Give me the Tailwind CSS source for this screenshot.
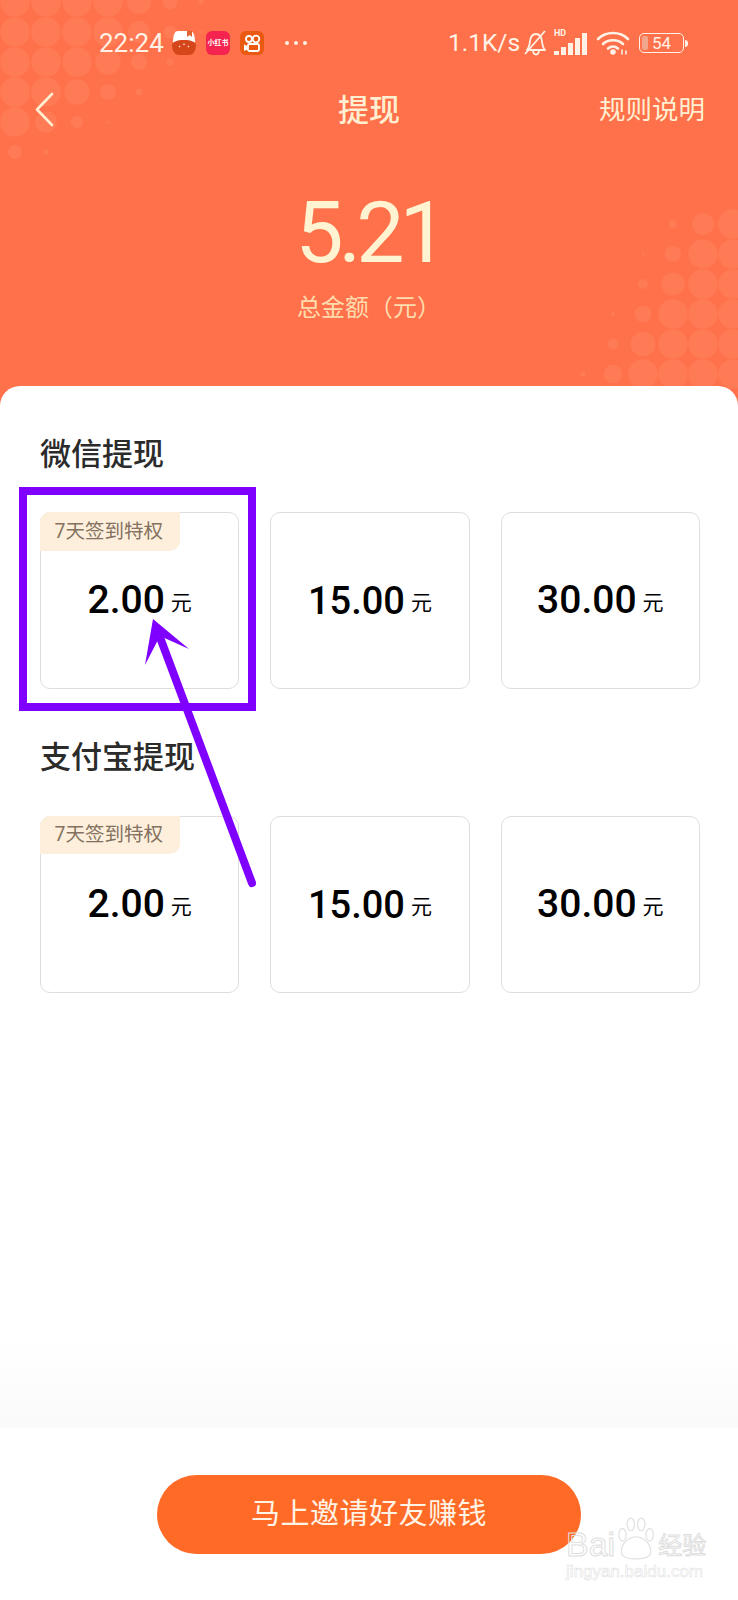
<!DOCTYPE html>
<html lang="zh-CN">
<head>
<meta charset="UTF-8" />
<meta name="viewport" content="width=device-width, initial-scale=1.0" />
<title>提现</title>
<script src="https://cdn.jsdelivr.net/npm/@tailwindcss/browser@4"></script>
</head>
<body class="bg-white">
<div class="relative w-[738px] h-[1600px] overflow-hidden flex flex-col bg-[#ff714a] font-['Roboto','Noto_Sans_CJK_SC',sans-serif]">

	<!-- dots behind the header -->
	<svg id="dots" class="absolute left-0 top-0" width="738" height="390" fill="#fff" fill-opacity="0.07"></svg>

	<header class="relative h-[386px] shrink-0 flex flex-col text-[#ffefd2]">
		<!-- status bar -->
		<div class="h-[86px] flex items-center pl-[99px] pr-[50px] text-[#fff1e6]">
			<span class="text-[26px] leading-none w-[73px]">22:24</span>
			<svg class="w-[24px] h-[24px] mr-[10px]" viewBox="0 0 24 24">
				<path d="M1 12C1 3 3 0 6 0h12c3 0 5 3 5 12H1z" fill="#fff" />
				<path d="M15 0h5v6l-2.500-2-2.500 2z" fill="#e0622e" />
				<path d="M0 14c0-3 5-5 12-5s12 2 12 5c0 6-3 10-7 10H7c-4 0-7-4-7-10z" fill="#d5471b" />
				<path d="M7 15l1 1M12 12.500v1.500M17 15l-1 1" stroke="#ffd9c4" stroke-width="1.500" />
			</svg>
			<div class="w-[24px] h-[24px] mr-[10px] rounded-[6px] bg-[#f5234f] flex items-center justify-center">
				<span class="text-[7px] leading-none font-bold text-white whitespace-nowrap">小红书</span>
			</div>
			<svg class="w-[24px] h-[24px]" viewBox="0 0 24 24">
				<rect width="24" height="24" rx="6" fill="#e9590f" />
				<g fill="none" stroke="#fff" stroke-width="1.800">
					<circle cx="9" cy="8" r="3" />
					<circle cx="16" cy="8" r="3.300" />
					<rect x="8" y="13" width="11" height="7" rx="1.500" />
				</g>
				<path d="M7.500 15L4 13.500V20l3.500-1.500z" fill="#fff" />
			</svg>
			<div class="flex gap-[5px] ml-[21px]">
				<span class="w-[4px] h-[4px] rounded-full bg-[#fff1e6]"></span>
				<span class="w-[4px] h-[4px] rounded-full bg-[#fff1e6]"></span>
				<span class="w-[4px] h-[4px] rounded-full bg-[#fff1e6]"></span>
			</div>
			<span class="ml-auto text-[24.500px] leading-none w-[75px] whitespace-nowrap">1.1K/s</span>
			<svg class="w-[24px] h-[26px] mr-[7px]" viewBox="0 0 24 26" fill="none" stroke="#fff1e6" stroke-width="1.800" stroke-linejoin="round">
				<path d="M4 20c2-2 2.500-5 3-8.500C7.500 7 9.500 4 13 4s5.500 3 6 7.500c.4 3.500 1 6.500 3 8.500H4z" />
				<path d="M10 20c0 3 1.300 4.500 3 4.500s3-1.500 3-4.500" />
				<path d="M22 1L2 24" />
			</svg>
			<div class="relative w-[34px] h-[24px] mr-[8px]">
				<span class="absolute left-0 -top-[2px] text-[9px] leading-none font-bold">HD</span>
				<div class="absolute inset-0 flex items-end gap-[2px]">
					<span class="w-[5px] h-[4px] bg-[#fff1e6]"></span>
					<span class="w-[5px] h-[8px] bg-[#fff1e6]"></span>
					<span class="w-[5px] h-[12px] bg-[#fff1e6]"></span>
					<span class="w-[5px] h-[17px] bg-[#fff1e6]"></span>
					<span class="w-[5px] h-[22px] bg-[#fff1e6]"></span>
				</div>
			</div>
			<svg class="w-[34px] h-[24px] mr-[9px]" viewBox="0 0 34 24" fill="none" stroke="#fff1e6" stroke-width="2.600" stroke-linecap="round">
				<path d="M2 8c8-8 22-8 30 0" />
				<path d="M7 13c5-5 15-5 20 0" />
				<path d="M12 17.500c3-2.500 7-2.500 10 0" />
				<circle cx="17" cy="21" r="1.500" fill="#fff1e6" />
				<path d="M26 19v4M30 20v3" stroke-width="1.500" />
			</svg>
			<div class="flex items-center">
				<div class="relative w-[45px] h-[20px] rounded-[5px] border-[1.500px] border-[#fff1e6] flex items-center justify-center">
					<span class="absolute left-[2px] top-[2px] bottom-[2px] w-[6px] rounded-[2px] bg-[#f0a58c]"></span>
					<span class="relative text-[17px] leading-none">54</span>
				</div>
				<span class="w-[3px] h-[7px] ml-[1px] rounded-r-full bg-[#fff1e6]"></span>
			</div>
		</div>
		<!-- nav -->
		<div class="relative h-[48px] flex items-center justify-center">
			<svg class="absolute left-[35px] top-[6px] w-[20px] h-[35px]" viewBox="0 0 20 35" fill="none" stroke="#ffefd2" stroke-width="2.600" stroke-linecap="round" stroke-linejoin="round">
				<path d="M17 2L2 17.500 17 33" />
			</svg>
			<span class="text-[31px] leading-none font-medium">提现</span>
			<span class="absolute right-[33px] top-[10px] text-[26.500px] leading-[28px]">规则说明</span>
		</div>
		<!-- balance -->
		<div class="mt-[52px] flex flex-col items-center">
			<span class="text-[86px] leading-[94px] tracking-[-5px] text-[#fff3d2]">5.21</span>
			<span class="mt-[12px] text-[24px] leading-[32px] text-[#ffdcae]">总金额（元）</span>
		</div>
	</header>

	<!-- white panel -->
	<main class="relative flex-1 bg-white rounded-t-[20px] px-[40px] pt-[50px] flex flex-col">
		<h2 class="text-[31px] leading-[38px] font-medium text-[#2b2b2b]">微信提现</h2>
		<div class="mt-[38px] grid grid-cols-3 gap-[31px] w-[660px]">
			<div class="relative h-[177px] rounded-[10px] border-[1.500px] border-[#dedede] flex items-center justify-center text-black">
				<span class="absolute -left-[1.500px] -top-[1.500px] w-[140px] h-[39px] rounded-tl-[10px] rounded-br-[10px] bg-[#fdefdc] text-[#84715f] text-[19.500px] leading-[39px] pl-[15px] whitespace-nowrap">7天签到特权</span>
				<span class="text-[39px] leading-none font-medium">2.00</span>
				<span class="ml-[6px] mt-[6px] text-[21px] leading-none">元</span>
			</div>
			<div class="h-[177px] rounded-[10px] border-[1.500px] border-[#dedede] flex items-center justify-center text-black">
				<span class="text-[38px] leading-none font-medium">15.00</span>
				<span class="ml-[6px] mt-[6px] text-[21px] leading-none">元</span>
			</div>
			<div class="h-[177px] rounded-[10px] border-[1.500px] border-[#dedede] flex items-center justify-center text-black">
				<span class="text-[39px] leading-none font-medium">30.00</span>
				<span class="ml-[6px] mt-[6px] text-[21px] leading-none">元</span>
			</div>
		</div>

		<h2 class="mt-[50px] text-[31px] leading-[38px] font-medium text-[#2b2b2b]">支付宝提现</h2>
		<div class="mt-[39px] grid grid-cols-3 gap-[31px] w-[660px]">
			<div class="relative h-[177px] rounded-[10px] border-[1.500px] border-[#dedede] flex items-center justify-center text-black">
				<span class="absolute -left-[1.500px] -top-[1.500px] w-[140px] h-[38px] rounded-tl-[10px] rounded-br-[10px] bg-[#fdefdc] text-[#84715f] text-[19.500px] leading-[38px] pl-[15px] whitespace-nowrap">7天签到特权</span>
				<span class="text-[39px] leading-none font-medium">2.00</span>
				<span class="ml-[6px] mt-[6px] text-[21px] leading-none">元</span>
			</div>
			<div class="h-[177px] rounded-[10px] border-[1.500px] border-[#dedede] flex items-center justify-center text-black">
				<span class="text-[38px] leading-none font-medium">15.00</span>
				<span class="ml-[6px] mt-[6px] text-[21px] leading-none">元</span>
			</div>
			<div class="h-[177px] rounded-[10px] border-[1.500px] border-[#dedede] flex items-center justify-center text-black">
				<span class="text-[39px] leading-none font-medium">30.00</span>
				<span class="ml-[6px] mt-[6px] text-[21px] leading-none">元</span>
			</div>
		</div>

		<!-- faint fade above the button -->
		<div class="mt-auto -mx-[40px] h-[90px] bg-gradient-to-b from-white to-[#fafafa]"></div>
		<div class="h-[172px] -mx-[40px] flex justify-center pt-[47px]">
			<button class="w-[424px] h-[79px] rounded-full bg-[#ff6b27] text-[29px] tracking-[0.500px] text-[#fff3e6]">马上邀请好友赚钱</button>
		</div>
	</main>

	<!-- annotation drawn over the screenshot -->
	<div class="absolute left-[19px] top-[487px] w-[237px] h-[224px] border-[8px] border-[#7f00ff]"></div>
	<svg class="absolute left-0 top-0 pointer-events-none" width="738" height="1600">
		<path d="M252 883L161 640" stroke="#7f00ff" stroke-width="8" stroke-linecap="round" fill="none" />
		<path d="M153 619L189 649 160 636 145 665z" fill="#7f00ff" />
	</svg>

	<!-- baidu watermark -->
	<div class="absolute left-[566px] top-[1526px] w-[160px] text-transparent [-webkit-text-stroke:1px_#dedede] font-['Liberation_Sans','Noto_Sans_CJK_SC',sans-serif]">
		<div class="flex items-end text-[34px] leading-[36px]">
			<span>Bai</span>
			<svg class="w-[40px] h-[46px] -mt-[10px]" viewBox="0 0 36 44" fill="none" stroke="#e4e4e4" stroke-width="1.300">
				<ellipse cx="6" cy="18" rx="3.500" ry="6" />
				<ellipse cx="14" cy="8" rx="3.500" ry="6" />
				<ellipse cx="24" cy="8" rx="3.500" ry="6" />
				<ellipse cx="32" cy="18" rx="3.500" ry="6" />
				<path d="M5 34c0-9 8-14 14-14s14 5 14 14c0 6-7 7-14 7S5 40 5 34z" />
			</svg>
			<span class="ml-[3px] text-[24px] leading-[32px]">经验</span>
		</div>
		<div class="text-[17px] leading-[20px] whitespace-nowrap [-webkit-text-stroke:0.500px_#dedede]">jingyan.baidu.com</div>
	</div>
</div>
<script>
	// halftone dots, radius shrinks away from the corners
	var svg = document.getElementById("dots");
	var out = "";
	function dot(x, y, r) {
		if (r > 1) out += '<circle cx="' + x + '" cy="' + y + '" r="' + r.toFixed(1) + '"/>';
	}
	for (var y = 2; y < 180; y += 30) {
		for (var x = 15; x < 240; x += 31) {
			var t = 1 - (x / 220 + (y / 180) * (y / 180));
			dot(x, y, 14.8 * Math.min(1, t * 2.2));
		}
	}
	for (var y = 224; y < 400; y += 30) {
		for (var x = 733; x > 540; x -= 30) {
			var s = (x - 653) / 87 + (y - 225) / 158;
			dot(x, y, 14.8 * Math.min(1, s * 1.3));
		}
	}
	svg.innerHTML = out;
</script>
</body>
</html>
